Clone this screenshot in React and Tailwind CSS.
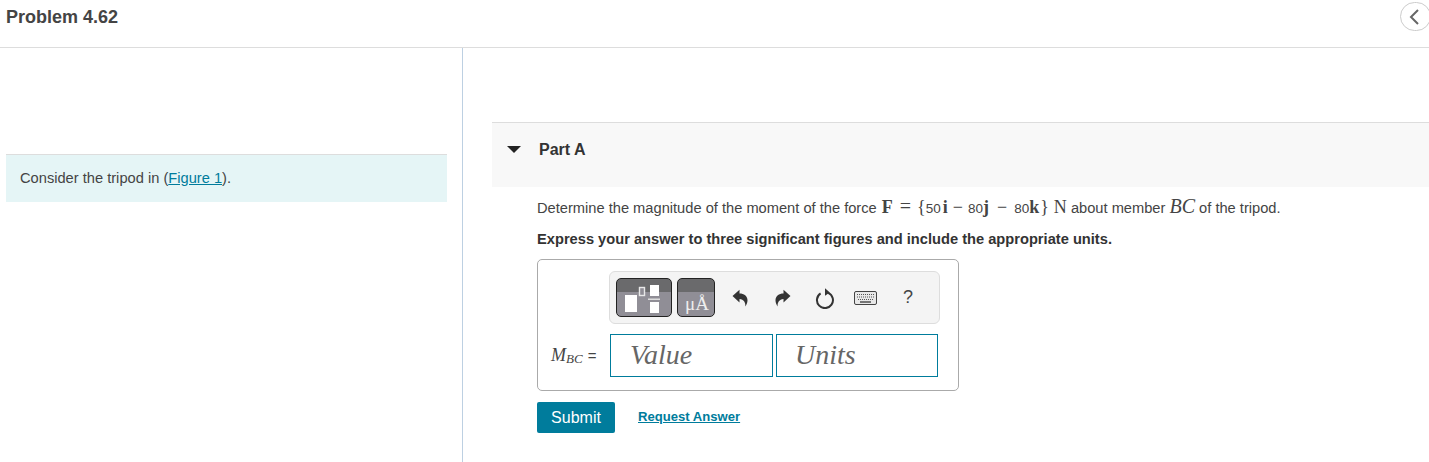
const sans = 'font-["Liberation_Sans",Arial,sans-serif]';
const btnBg = 'bg-[linear-gradient(#6a6a6c_0,#6a6a6c_36%,#908e96_36%,#908e96_100%)]';

const Undo = () => (
  <svg width="16" height="18" viewBox="0 0 16 18" className="text-[#333]">
    <path fill="currentColor" d="M0.5 7 L7.5 0.8 V4.6 C12 4.6 15.5 7.2 15.5 11.2 C15.5 13.6 14.6 15.6 13.4 17.4 C13.6 13.4 11.8 10.3 7.5 10 V13.4 Z" />
  </svg>
);

const Redo = () => (
  <svg width="16" height="18" viewBox="0 0 16 18" className="text-[#333] -scale-x-100">
    <path fill="currentColor" d="M0.5 7 L7.5 0.8 V4.6 C12 4.6 15.5 7.2 15.5 11.2 C15.5 13.6 14.6 15.6 13.4 17.4 C13.6 13.4 11.8 10.3 7.5 10 V13.4 Z" />
  </svg>
);

const Reset = () => (
  <svg width="20" height="22" viewBox="0 0 20 22" className="text-[#333]">
    <path fill="none" stroke="currentColor" strokeWidth="2" d="M5.6 6.4 A8 8 0 1 0 13.2 5.8" />
    <path fill="currentColor" d="M10 1.2 L14.8 5.6 L10 8.8 Z" />
  </svg>
);

const Keyboard = () => (
  <svg width="23" height="14" viewBox="0 0 23 14">
    <rect x="0.5" y="0.5" width="22" height="13" rx="1.5" fill="#e8e8e8" stroke="#444" />
    <path stroke="#555" strokeWidth="1.2" strokeDasharray="1 1" d="M3 3.5 H20 M3 6 H20 M4 8.5 H19" />
    <path stroke="#444" strokeWidth="1.4" d="M6 11 H17" />
  </svg>
);

const TemplatesIcon = () => (
  <svg width="56" height="39" viewBox="0 0 56 39" className="absolute -left-px -top-px">
    <rect x="9" y="17" width="12" height="17" fill="#fff" />
    <rect x="23.5" y="9.5" width="5" height="8" fill="#8f8d95" stroke="#e8e8e8" strokeWidth="1.4" />
    <rect x="34" y="7" width="9" height="11" fill="#fff" />
    <rect x="32" y="20.5" width="12" height="1.5" fill="#ddd" />
    <rect x="34" y="24" width="9" height="11" fill="#fff" />
  </svg>
);

export default function App() {
  return (
    <div className={`${sans} w-[1429px] h-[462px] overflow-hidden bg-white text-[#333] flex flex-col`}>
      <header className="h-[48px] shrink-0 border-b border-[#ddd] flex items-start justify-between">
        <h1 className="pl-[6px] pt-[7px] text-[18px] leading-[20px] font-bold text-[#444]">Problem 4.62</h1>
        <button className="mt-[2px] mr-[-2px] w-[31px] h-[29px] rounded-full border border-[#ccc] flex items-center justify-center">
          <svg width="10" height="16" viewBox="0 0 10 16" className="mr-[3px]">
            <path d="M9 1 L2 8 L9 15" fill="none" stroke="#666" strokeWidth="2" />
          </svg>
        </button>
      </header>

      <main className="flex flex-1 min-h-0">
        <section className="w-[463px] shrink-0 border-r border-[#bdd0e2] pt-[106px] pl-[6px] pr-[15px]">
          <div className="h-[48px] bg-[#e5f5f6] border-t border-[#ddd] pl-[14px] pt-[14px] text-[14.67px] leading-[18px] text-[#444]">
            Consider the tripod in (<a className="text-[#007c9c] underline">Figure 1</a>).
          </div>
        </section>

        <section className="flex-1 min-w-0 pt-[74px] pl-[29px]">
          <div className="h-[65px] bg-[#f8f8f8] border-t border-[#ddd] flex items-start pt-[18px]">
            <svg width="14" height="8" viewBox="0 0 14 8" className="ml-[15px] mt-[5px]">
              <path d="M0 0 H14 L7 7 Z" fill="#222" />
            </svg>
            <h2 className="ml-[18px] text-[16px] leading-[18px] font-bold text-[#333]">Part A</h2>
          </div>

          <div className="pl-[45px] pt-[9px]">
            <p className="h-[20px] text-[14.67px] leading-[20px] text-[#444] whitespace-nowrap">
              Determine the magnitude of the moment of the force{' '}
              <span className='font-["Liberation_Serif",serif] text-[18px]'>
                <b className="ml-px">F</b>
                <span className="ml-[7px] text-[20px]">=</span>
                <span className="ml-[6px]">{'{'}</span>
              </span>
              <span className="text-[13.5px]">50</span>
              <b className='ml-[2px] font-["Liberation_Serif",serif] text-[18px]'>i</b>
              <span className='ml-[5px] font-["Liberation_Serif",serif] text-[18px]'>−</span>
              <span className="ml-[5px] text-[13.5px]">80</span>
              <b className='font-["Liberation_Serif",serif] text-[18px]'>j</b>
              <span className='ml-[8px] font-["Liberation_Serif",serif] text-[18px]'>−</span>
              <span className="ml-[7px] text-[13.5px]">80</span>
              <b className='font-["Liberation_Serif",serif] text-[18px]'>k</b>
              <span className='ml-[1px] font-["Liberation_Serif",serif] text-[18px]'>{'}'}</span>
              <span className='ml-[5px] font-["Liberation_Serif",serif] text-[18px]'>N</span>
              {' '}about member{' '}
              <i className='font-["Liberation_Serif",serif] text-[20px]'>BC</i> of the tripod.
            </p>
            <p className="mt-[13px] text-[14.67px] leading-[20px] font-bold text-[#333]">
              Express your answer to three significant figures and include the appropriate units.
            </p>

            <div className="mt-[10px] w-[422px] h-[132px] rounded-[5px] border border-[#aaa] pt-[11px] pl-[71px]">
              <div className="w-[331px] h-[53px] rounded-[6px] border border-[#ddd] bg-[#f4f4f4] flex items-center pl-[6px]">
                <button className={`relative w-[56px] h-[39px] rounded-[5px] border border-[#222] ${btnBg} overflow-hidden`}>
                  <TemplatesIcon />
                </button>
                <button className={`ml-[5px] w-[38px] h-[39px] rounded-[5px] border border-[#222] ${btnBg} font-['Liberation_Serif',serif] text-[#eee] text-[19px] leading-[18px] pt-[13px] pl-[2px]`}>
                  μÅ
                </button>
                <div className="ml-[17px]"><Undo /></div>
                <div className="ml-[27px]"><Redo /></div>
                <div className="ml-[24px]"><Reset /></div>
                <div className="ml-[19px]"><Keyboard /></div>
                <span className="ml-[26px] text-[18px] text-[#444]">?</span>
              </div>

              <div className="relative mt-[10px] ml-[1px] flex gap-[3px]">
                <span className="absolute left-[-59px] top-[11px] whitespace-nowrap font-['Liberation_Serif',serif] text-[18px] leading-[20px] text-[#444]">
                  <i>M</i><i className="relative top-[2px] text-[13px]">BC</i>
                  <span className={`${sans} ml-[5px] text-[15px]`}>=</span>
                </span>
                <div className="w-[163px] h-[43px] border border-[#007c9c] bg-white pl-[19px] font-['Liberation_Serif',serif] italic text-[28px] leading-[40px] text-[#666]">
                  Value
                </div>
                <div className="w-[162px] h-[43px] border border-[#007c9c] bg-white pl-[18px] font-['Liberation_Serif',serif] italic text-[28px] leading-[40px] text-[#666]">
                  Units
                </div>
              </div>
            </div>

            <div className="mt-[11px] flex items-start">
              <button className="w-[78px] h-[31px] rounded-[2px] bg-[#007c9c] text-white text-[16px] leading-[26px]">Submit</button>
              <a className="ml-[23px] mt-[7px] text-[13.1px] leading-[16px] font-bold text-[#007c9c] underline">Request Answer</a>
            </div>
          </div>
        </section>
      </main>
    </div>
  );
}
